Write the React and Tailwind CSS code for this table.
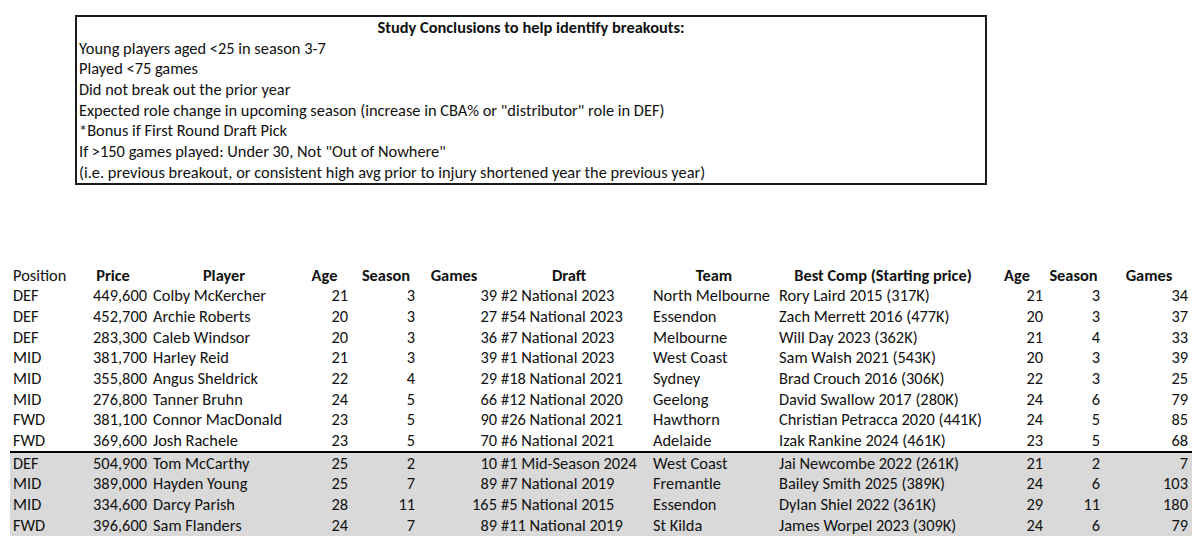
const conclusions = [
    'Young players aged <25 in season 3-7',
    'Played <75 games',
    'Did not break out the prior year',
    'Expected role change in upcoming season (increase in CBA% or "distributor" role in DEF)',
    '*Bonus if First Round Draft Pick',
    'If >150 games played: Under 30, Not "Out of Nowhere"',
    '(i.e. previous breakout, or consistent high avg prior to injury shortened year the previous year)',
];

const prospects = [
    ['DEF', '449,600', 'Colby McKercher', 21, 3, 39, '#2 National 2023', 'North Melbourne', 'Rory Laird 2015 (317K)', 21, 3, 34],
    ['DEF', '452,700', 'Archie Roberts', 20, 3, 27, '#54 National 2023', 'Essendon', 'Zach Merrett 2016 (477K)', 20, 3, 37],
    ['DEF', '283,300', 'Caleb Windsor', 20, 3, 36, '#7 National 2023', 'Melbourne', 'Will Day 2023 (362K)', 21, 4, 33],
    ['MID', '381,700', 'Harley Reid', 21, 3, 39, '#1 National 2023', 'West Coast', 'Sam Walsh 2021 (543K)', 20, 3, 39],
    ['MID', '355,800', 'Angus Sheldrick', 22, 4, 29, '#18 National 2021', 'Sydney', 'Brad Crouch 2016 (306K)', 22, 3, 25],
    ['MID', '276,800', 'Tanner Bruhn', 24, 5, 66, '#12 National 2020', 'Geelong', 'David Swallow 2017 (280K)', 24, 6, 79],
    ['FWD', '381,100', 'Connor MacDonald', 23, 5, 90, '#26 National 2021', 'Hawthorn', 'Christian Petracca 2020 (441K)', 24, 5, 85],
    ['FWD', '369,600', 'Josh Rachele', 23, 5, 70, '#6 National 2021', 'Adelaide', 'Izak Rankine 2024 (461K)', 23, 5, 68],
];

const veterans = [
    ['DEF', '504,900', 'Tom McCarthy', 25, 2, 10, '#1 Mid-Season 2024', 'West Coast', 'Jai Newcombe 2022 (261K)', 21, 2, 7],
    ['MID', '389,000', 'Hayden Young', 25, 7, 89, '#7 National 2019', 'Fremantle', 'Bailey Smith 2025 (389K)', 24, 6, 103],
    ['MID', '334,600', 'Darcy Parish', 28, 11, 165, '#5 National 2015', 'Essendon', 'Dylan Shiel 2022 (361K)', 29, 11, 180],
    ['FWD', '396,600', 'Sam Flanders', 24, 7, 89, '#11 National 2019', 'St Kilda', 'James Worpel 2023 (309K)', 24, 6, 79],
];

// column widths in px, matched to the sheet
const cols = 'grid grid-cols-[67px_72px_150px_51px_67px_82px_152px_126px_212px_56px_57px_90px]';

function DataRow({ row }) {
    const [pos, price, player, age, season, games, draft, team, comp, age2, season2, games2] = row;
    return (
        <div className={`${cols} h-[20.7px] items-center whitespace-nowrap`}>
            <div className="pl-[3px]">{pos}</div>
            <div className="text-right pr-[2px]">{price}</div>
            <div className="pl-[4px]">{player}</div>
            <div className="text-right pr-[2px]">{age}</div>
            <div className="text-right pr-[2px]">{season}</div>
            <div className="text-right pr-[2px]">{games}</div>
            <div className="pl-[2px]">{draft}</div>
            <div className="pl-[2px]">{team}</div>
            <div className="pl-[2px]">{comp}</div>
            <div className="text-right pr-[2px]">{age2}</div>
            <div className="text-right pr-[2px]">{season2}</div>
            <div className="text-right pr-[4px]">{games2}</div>
        </div>
    );
}

export default function App() {
    return (
        <div
            className="w-[1200px] h-[545px] bg-white text-[#111] text-[16.4px] leading-[20.7px] font-medium overflow-hidden"
            style={{ fontFamily: 'Carlito, Calibri, Lato, "Liberation Sans", sans-serif' }}
        >
            {/* Notes box */}
            <div className="pt-[15px] pl-[75px]">
                <div className="w-[912px] border-2 border-[#1c1c1c]">
                    <div className="h-[20.7px] text-center font-bold">Study Conclusions to help identify breakouts:</div>
                    {conclusions.map((line) => (
                        <div key={line} className="h-[20.7px] pl-[2px] whitespace-nowrap">{line}</div>
                    ))}
                </div>
            </div>

            {/* Comparison table */}
            <div className="mt-[80px] ml-[10px] w-[1182px]">
                <div className={`${cols} h-[20.7px] items-center whitespace-nowrap font-bold`}>
                    <div className="pl-[3px] font-medium">Position</div>
                    <div className="text-center">Price</div>
                    <div className="text-center">Player</div>
                    <div className="text-center">Age</div>
                    <div className="text-center pl-[5px]">Season</div>
                    <div className="text-center pr-[8px]">Games</div>
                    <div className="text-center pr-[12px]">Draft</div>
                    <div className="text-center">Team</div>
                    <div className="text-center">Best Comp (Starting price)</div>
                    <div className="text-center">Age</div>
                    <div className="text-center">Season</div>
                    <div className="text-center pl-[4px]">Games</div>
                </div>
                {prospects.map((row) => (
                    <DataRow key={row[2]} row={row} />
                ))}
                <div className="border-t-2 border-black bg-[#d9d9d9] pb-[1px]">
                    {veterans.map((row) => (
                        <DataRow key={row[2]} row={row} />
                    ))}
                </div>
            </div>
        </div>
    );
}
